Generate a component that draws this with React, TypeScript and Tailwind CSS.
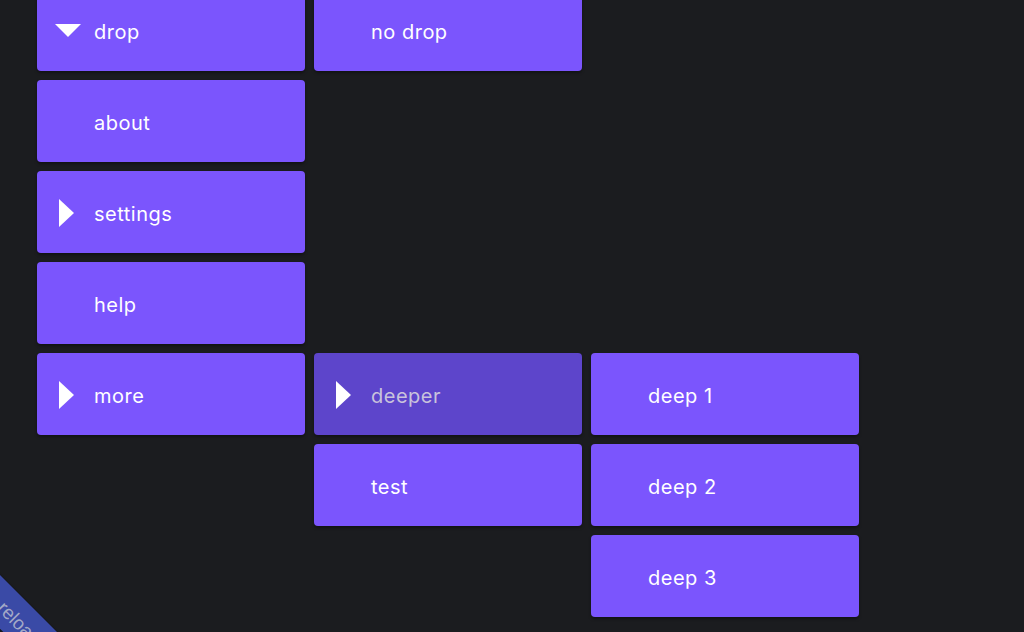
import React from "react";

type Item = { label: string; col: string; row: string; arrow?: "down" | "right"; dim?: boolean };

const items: Item[] = [
  { label: "drop", col: "col-start-1", row: "row-start-1", arrow: "down" },
  { label: "no drop", col: "col-start-2", row: "row-start-1" },
  { label: "about", col: "col-start-1", row: "row-start-2" },
  { label: "settings", col: "col-start-1", row: "row-start-3", arrow: "right" },
  { label: "help", col: "col-start-1", row: "row-start-4" },
  { label: "more", col: "col-start-1", row: "row-start-5", arrow: "right" },
  { label: "deeper", col: "col-start-2", row: "row-start-5", arrow: "right", dim: true },
  { label: "test", col: "col-start-2", row: "row-start-6" },
  { label: "deep 1", col: "col-start-3", row: "row-start-5" },
  { label: "deep 2", col: "col-start-3", row: "row-start-6" },
  { label: "deep 3", col: "col-start-3", row: "row-start-7" },
];

function Arrow({ dir }: { dir: "down" | "right" }) {
  if (dir === "down") {
    return (
      <svg width="26" height="14" viewBox="0 0 26 14" className="absolute left-[18px] top-[35px]">
        <polygon points="0,0 26,0 13,13" fill="white" />
      </svg>
    );
  }
  return (
    <svg width="15" height="28" viewBox="0 0 15 28" className="absolute left-[22px] top-[28px]">
      <polygon points="0,0 15,14 0,28" fill="white" />
    </svg>
  );
}

export default function App() {
  return (
    <div
      className="relative w-[1024px] h-[632px] overflow-hidden bg-[#1b1c1f]"
      style={{ fontFamily: "Inter, 'Noto Sans', sans-serif" }}
    >
      <div className="grid grid-cols-[268px_268px_268px] auto-rows-[82px] gap-[9px] pl-[37px] mt-[-11px]">
        {items.map((it) => (
          <div
            key={it.label}
            className={`${it.col} ${it.row} relative flex items-center rounded-[4px] shadow-[0_2px_3px_rgba(0,0,0,0.35)] ${
              it.dim ? "bg-[#5d45cb] text-[#c9c3dc]" : "bg-[#7b55fd] text-white"
            }`}
          >
            {it.arrow && <Arrow dir={it.arrow} />}
            <span className="pl-[57px] text-[20px] leading-none pt-[3px] tracking-[0.5px]">{it.label}</span>
          </div>
        ))}
      </div>
      <div className="absolute left-[-100px] top-[475px] w-[400px] h-[38px] bg-[#3a4aa6] rotate-45 origin-top-left flex items-center shadow-[0_0_2px_rgba(0,0,0,0.5)]">
        <span
          className="pl-[163px] pt-[2px] text-[19px] leading-none text-[#a3a9c6]"
          style={{ fontFamily: "'Liberation Sans', sans-serif" }}
        >
          reload
        </span>
      </div>
    </div>
  );
}
